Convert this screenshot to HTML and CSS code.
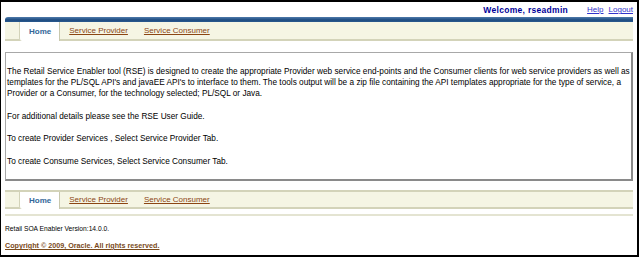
FILE: index.html
```html
<!DOCTYPE html>
<html lang="en">
<head>
<title>Retail Service Enabler</title>
<link rel="stylesheet" href="styles.css">
</head>
<body>
<div id="frame">
	<div class="userbar">
		<span class="welcome">Welcome, rseadmin</span>
		<a href="#">Help</a>
		<a href="#">Logout</a>
	</div>
	<div class="bluebar"></div>
	<div class="tabs">
		<span class="tab current">Home</span>
		<a class="tab" href="#">Service Provider</a>
		<a class="tab" href="#">Service Consumer</a>
	</div>
	<div class="content">
		<p>The Retail Service Enabler tool (RSE) is designed to create the appropriate Provider web service end-points and the Consumer clients for web service providers as well as<br>templates for the PL/SQL API's and javaEE API's to interface to them. The tools output will be a zip file containing the API templates appropriate for the type of service, a<br>Provider or a Consumer, for the technology selected; PL/SQL or Java.</p>
		<p>For additional details please see the RSE User Guide.</p>
		<p>To create Provider Services , Select Service Provider Tab.</p>
		<p>To create Consume Services, Select Service Consumer Tab.</p>
	</div>
	<div class="tabs bottom">
		<span class="tab current">Home</span>
		<a class="tab" href="#">Service Provider</a>
		<a class="tab" href="#">Service Consumer</a>
	</div>
	<div class="rule"></div>
	<p class="version">Retail SOA Enabler Version:14.0.0.</p>
	<p class="copy"><a href="#">Copyright &copy; 2009, Oracle. All rights reserved.</a></p>
</div>
</body>
</html>
```
FILE: styles.css
```css
* {
	margin: 0;
	padding: 0;
	}
body{
	font-family:"Liberation Sans",Arial,sans-serif;
	background-color:#fff;
	}
#frame{
	width:639px;
	height:257px;
	box-sizing:border-box;
	border:2px solid #000;
	border-left-width:1px;
	padding:0 4px 0 4px;
	overflow:hidden;
	}
.userbar{
	height:15px;
	display:flex;
	justify-content:flex-end;
	align-items:center;
	gap:5px;
	font-size:8px;
	}
.welcome{
	color:#000099;
	font-weight:bold;
	font-size:8.5px;
	letter-spacing:0.3px;
	margin-right:14px;
	}
.userbar a{
	color:#3333cc;
	}
.bluebar{
	height:5px;
	background:linear-gradient(#4f7bab,#1d4b80 60%,#2b5a8f);
	border-radius:3px 0 0 0;
	}
.tabs{
	height:17px;
	display:flex;
	align-items:stretch;
	background-color:#f5f5e4;
	border-bottom:2px solid #d3d3b9;
	padding-left:14px;
	font-size:8px;
	}
.tab{
	display:flex;
	align-items:center;
	padding:0 8px 0 8px;
	color:#8b4513;
	}
.tab.current{
	background-color:#fff;
	color:#336699;
	font-weight:bold;
	border-left:1px solid #d3d3b9;
	border-right:1px solid #c8c8ad;
	border-radius:0 0 0 3px;
	margin-bottom:-2px;
	padding:0 8px 0 9px;
	margin-right:1px;
	}
.tabs.bottom{
	margin-top:9px;
	height:15px;
	border-top:2px solid #d3d3b9;
	}
.content{
	margin-top:11px;
	height:129px;
	box-sizing:border-box;
	border:1px solid #a8a8a8;
	border-right:2px solid #8a8a8a;
	border-bottom:2px solid #8a8a8a;
	padding:13px 0 0 1px;
	font-size:8.25px;
	line-height:11px;
	color:#000;
	}
.content p{
	margin-bottom:11.5px;
	}
.rule{
	margin-top:5px;
	height:2px;
	background-color:#e4e4d2;
	}
.version{
	font-size:6.7px;
	margin-top:9px;
	}
.copy{
	font-size:7.2px;
	font-weight:bold;
	margin-top:9px;
	}
.copy a{
	color:#7a4a1a;
	}
```
